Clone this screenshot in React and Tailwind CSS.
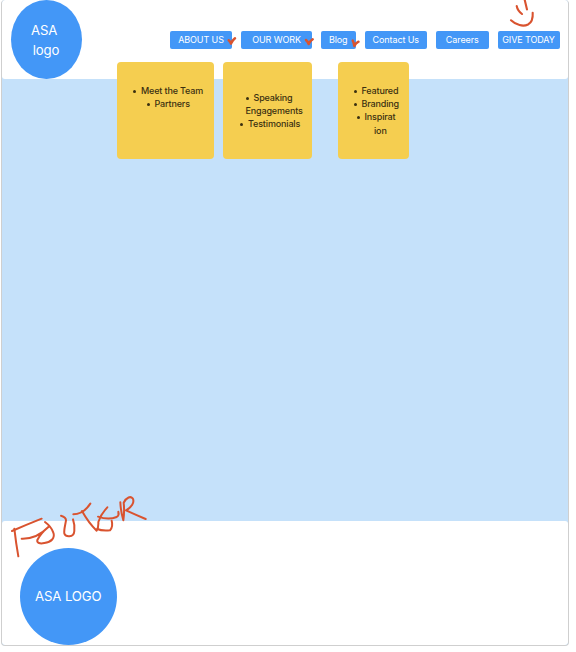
const navItems = [
  { label: "ABOUT US", box: "w-[62px]" },
  { label: "OUR WORK", box: "ml-[9px] w-[71px]" },
  { label: "Blog", box: "ml-[8.5px] w-[35.5px]" },
  { label: "Contact Us", box: "ml-[8.5px] w-[62.5px]" },
  { label: "Careers", box: "ml-[8.5px] w-[53.5px]" },
  { label: "GIVE TODAY", box: "ml-[8.5px] w-[62px]" },
];

const menus = [
  {
    box: "w-[97px] pt-[22px]",
    items: [
      { text: "Meet the Team", pad: "pl-[24px]" },
      { text: "Partners", pad: "pl-[37.5px]" },
    ],
  },
  {
    box: "ml-[9px] w-[89px] pt-[29px]",
    items: [
      { text: "Speaking", pad: "pl-[30.5px]" },
      { text: "Engagements", pad: "pl-[22.5px]", plain: true },
      { text: "Testimonials", pad: "pl-[25px]" },
    ],
  },
  {
    box: "ml-[26px] w-[71px] pt-[22px]",
    items: [
      { text: "Featured", pad: "pl-[23.5px]" },
      { text: "Branding", pad: "pl-[23.5px]" },
      { text: "Inspirat", pad: "pl-[26.5px]" },
      { text: "ion", pad: "pl-[36px]", plain: true },
    ],
  },
];

function NavBar() {
  return (
    <nav className="flex pt-[31px]">
      {navItems.map((item) => (
        <button
          key={item.label}
          className={`flex h-[17.5px] shrink-0 items-center justify-center whitespace-nowrap rounded-[2px] bg-[#4397f7] text-[9px] leading-none tracking-[-0.1px] text-white ${item.box}`}
        >
          {item.label}
        </button>
      ))}
    </nav>
  );
}

function Menu({ box, items }) {
  return (
    <ul className={`h-[97px] shrink-0 rounded-[4px] bg-[#f5ce50] text-[9px] font-medium leading-[13.2px] tracking-[-0.15px] text-[#3b3010] ${box}`}>
      {items.map((item) => (
        <li key={item.text} className={`whitespace-nowrap ${item.pad}`}>
          {!item.plain && (
            <span className="relative -left-[8px] top-[-1px] -mr-[3px] inline-block size-[3px] rounded-full bg-[#3b3010]" />
          )}
          {item.text}
        </li>
      ))}
    </ul>
  );
}

// Hand-drawn red pen marks laid over the wireframe.
function Annotations() {
  return (
    <svg
      className="pointer-events-none absolute left-0 top-0"
      width="576"
      height="652"
      viewBox="0 0 576 652"
      fill="none"
      stroke="#d9532f"
      strokeLinecap="round"
      strokeLinejoin="round"
    >
      <g strokeWidth="2.5">
        <path d="M228.7 40.3 Q230.3 41.5 231 43.5 Q232.2 40.5 235 38.3" />
        <path d="M306 40 Q308 42 308.7 44 Q310 41 312.7 39.3" />
        <path d="M352.7 40.5 Q354 43 354.3 46 Q355.8 43 358.5 41.7" />
      </g>
      <g strokeWidth="2.1">
        <path d="M516.7 6 Q517.5 10.5 522 14" />
        <path d="M524.5 -1 L527 9.5" />
        <path d="M511 20.3 C516 25 523 27 528 24.5 Q533.3 21.5 532.7 12.7" />
      </g>
      <g transform="translate(0 485) scale(.33333)" strokeWidth="6">
        <path d="M43 131 Q48 175 55 214" />
        <path d="M36 138 Q80 119 125 101" />
        <path d="M65 161 C95 162 122 150 145 126 Q122 145 112 165 C110 174 120 177 133 174 C154 171 166 159 160 143 Q154 125 135 111" />
        <path d="M183 92 Q198 96 198 106 C196 120 191 136 193 146 Q197 155 208 154 Q222 153 223 138 Q225 120 219 103" />
        <path d="M220 88 Q250 88 271 56" />
        <path d="M246 78 Q266 114 290 137 Q296 128 295 111 Q303 87 322 67" />
        <path d="M294 95 Q325 106 350 96 Q358 91 355 80" />
        <path d="M292 132 Q304 138 330 136 Q340 124 335 107" />
        <path d="M361 52 Q362 78 370 106 Q374 78 371 53 C380 36 392 33 398 40 C405 52 394 67 378 76 Q409 90 437 102" />
      </g>
    </svg>
  );
}

export default function App() {
  return (
    <div className="relative h-[652px] w-[576px] overflow-hidden bg-white font-['Inter',sans-serif]">
      <div className="ml-px flex h-[646px] w-[568px] flex-col overflow-hidden rounded-[4px] border border-t-0 border-[#cfcfcf] bg-[#c5e1fa]">
        <header className="flex h-[79.4px] shrink-0 rounded-[3px] bg-white">
          <div className="ml-[8.5px] flex h-[79.4px] w-[71px] shrink-0 items-center justify-center rounded-[50%] bg-[#4397f7] text-center text-[13.2px] leading-[20px] tracking-[-0.15px] text-white">
            <span className="whitespace-pre">{"ASA \nlogo"}</span>
          </div>
          <div className="ml-[88.5px]">
            <NavBar />
          </div>
        </header>
        <main className="flex-1" />
        <footer className="h-[124px] shrink-0 rounded-[3px] bg-white pl-[17.5px] pt-[26.5px]">
          <div className="flex size-[97.5px] items-center justify-center rounded-full bg-[#4397f7] pt-[2px] text-[13.2px] tracking-[-0.15px] text-white">
            ASA LOGO
          </div>
        </footer>
      </div>
      <div className="absolute left-[117px] top-[62px] flex">
        {menus.map((menu) => (
          <Menu key={menu.items[0].text} {...menu} />
        ))}
      </div>
      <Annotations />
    </div>
  );
}
